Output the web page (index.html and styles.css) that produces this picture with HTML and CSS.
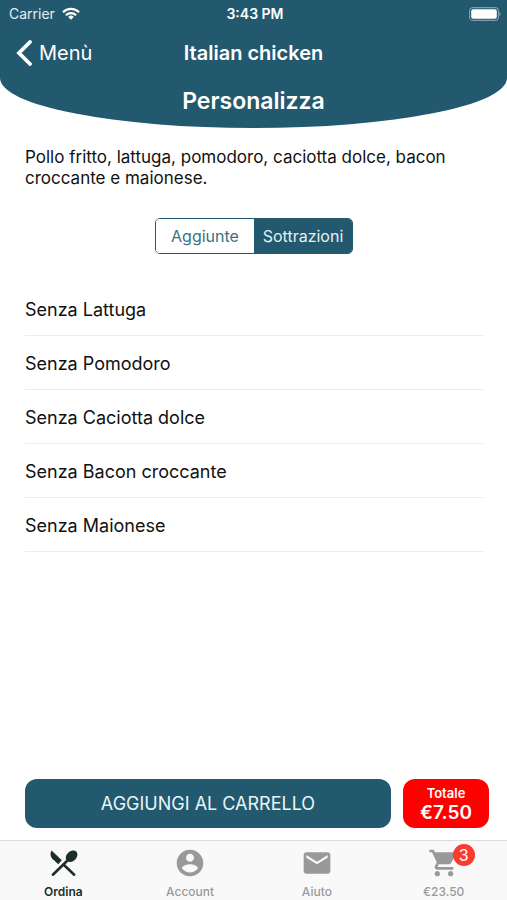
FILE: index.html
```html
<!DOCTYPE html>
<html lang="it">
<head>
<meta charset="utf-8">
<meta name="viewport" content="width=device-width, initial-scale=1">
<title>Italian chicken</title>
<link rel="stylesheet" href="styles.css">
</head>
<body>
<header class="header">
  <div class="status">
    <div class="carrier">
      <span>Carrier</span>
      <svg class="wifi" viewBox="0 0 18 13" aria-hidden="true">
        <g fill="none" stroke="currentColor" stroke-width="2.2">
          <path d="M1 5.2a11.4 11.4 0 0 1 16 0"/>
          <path d="M3.900 8.300a7.300 7.300 0 0 1 10.200 0"/>
        </g>
        <path fill="currentColor" d="M9 12.700 6.200 9.900a4 4 0 0 1 5.600 0z"/>
      </svg>
    </div>
    <span class="clock">3:43 PM</span>
    <svg class="battery" viewBox="0 0 32 14" aria-hidden="true">
      <rect x=".6" y=".6" width="28.800" height="12.800" rx="3.500" fill="none" stroke="#7f9fae" stroke-width="1.100"/>
      <rect x="2.200" y="2.200" width="25.600" height="9.600" rx="2" fill="#fff"/>
      <path d="M30.300 4.800a2.500 2.500 0 0 1 0 4.400z" fill="#7f9fae"/>
    </svg>
  </div>
  <nav class="navbar">
    <a class="back" href="#">
      <svg class="chevron" viewBox="0 0 16 26" aria-hidden="true"><path d="M14 2 3 13l11 11" fill="none" stroke="currentColor" stroke-width="3.800" stroke-linecap="round" stroke-linejoin="miter"/></svg>
      <span>Menù</span>
    </a>
    <h1 class="title">Italian chicken</h1>
  </nav>
</header>
<div class="curve"><h2 class="subtitle">Personalizza</h2></div>
<main class="content">
  <p class="description">Pollo fritto, lattuga, pomodoro, caciotta dolce, bacon croccante e maionese.</p>
  <div class="segments">
    <button class="segment" type="button">Aggiunte</button>
    <button class="segment selected" type="button" aria-pressed="true">Sottrazioni</button>
  </div>
  <ul class="options">
    <li class="option">Senza Lattuga</li>
    <li class="option">Senza Pomodoro</li>
    <li class="option">Senza Caciotta dolce</li>
    <li class="option">Senza Bacon croccante</li>
    <li class="option">Senza Maionese</li>
  </ul>
</main>
<section class="actions">
  <button class="add" type="button">AGGIUNGI AL CARRELLO</button>
  <div class="total"><span class="total-label">Totale</span><span class="total-value">€7.50</span></div>
</section>
<nav class="tabs">
  <a class="tab active" href="#">
    <svg class="icon" viewBox="0 0 32 32" aria-hidden="true">
      <path d="M4.600 3.600 14.800 13.300 11.300 17.200 5 11.400C3.200 9.400 2.900 6 4.600 3.600z"/>
      <ellipse cx="24.600" cy="9.200" rx="4.900" ry="6.600" transform="rotate(45 24.600 9.200)"/>
      <path d="M22 12 5.900 27.700M16.200 17.300 27.200 27.700" fill="none" stroke="currentColor" stroke-width="2.600" stroke-linecap="round"/>
    </svg>
    <span>Ordina</span>
  </a>
  <a class="tab" href="#">
    <svg class="icon" viewBox="0 0 24 24" aria-hidden="true"><path d="M12 2C6.480 2 2 6.480 2 12s4.480 10 10 10 10-4.480 10-10S17.520 2 12 2zm0 3c1.660 0 3 1.340 3 3s-1.340 3-3 3-3-1.340-3-3 1.340-3 3-3zm0 14.200c-2.500 0-4.710-1.280-6-3.220.03-1.990 4-3.080 6-3.080 1.990 0 5.970 1.090 6 3.080-1.290 1.940-3.500 3.220-6 3.220z"/></svg>
    <span>Account</span>
  </a>
  <a class="tab" href="#">
    <svg class="icon" viewBox="0 0 24 24" aria-hidden="true"><path d="M20 4H4c-1.100 0-1.990.9-1.990 2L2 18c0 1.100.9 2 2 2h16c1.100 0 2-.9 2-2V6c0-1.100-.9-2-2-2zm0 4l-8 5-8-5V6l8 5 8-5v2z"/></svg>
    <span>Aiuto</span>
  </a>
  <a class="tab" href="#">
    <span class="cart">
      <svg class="icon" viewBox="0 0 24 24" aria-hidden="true"><path d="M7 18c-1.100 0-1.990.9-1.990 2S5.900 22 7 22s2-.9 2-2-.9-2-2-2zM1 2v2h2l3.600 7.590-1.350 2.450c-.16.28-.25.61-.25.96 0 1.100.9 2 2 2h12v-2H7.420c-.14 0-.25-.11-.25-.25l.03-.12.9-1.630h7.450c.75 0 1.410-.41 1.750-1.030l3.580-6.490c.08-.14.12-.31.12-.48 0-.55-.45-1-1-1H5.210l-.94-2H1zm16 16c-1.100 0-1.990.9-1.990 2s.89 2 1.990 2 2-.9 2-2-.9-2-2-2z"/></svg>
      <span class="badge">3</span>
    </span>
    <span>€23.50</span>
  </a>
</nav>
</body>
</html>
```

FILE: styles.css
```css
* {
  box-sizing: border-box;
}

body {
  margin: 0;
  min-height: 100vh;
  display: flex;
  flex-direction: column;
  background: #fff;
  color: #111;
  font-family: Inter, "Liberation Sans", sans-serif;
}

a {
  color: inherit;
  text-decoration: none;
}

button {
  font: inherit;
  cursor: pointer;
}

h1,
h2,
p,
ul {
  margin: 0;
  padding: 0;
  font-weight: 600;
}

.header,
.curve {
  background: #23596e;
  color: #fff;
}

.status {
  display: grid;
  grid-template-columns: 1fr auto 1fr;
  align-items: center;
  height: 27px;
  padding: 0 6px 0 9px;
  font-size: 14px;
}

.carrier {
  display: flex;
  align-items: center;
  gap: 7px;
  color: #e6edf0;
}

.wifi {
  width: 18px;
  height: 13px;
  color: #fff;
}

.clock {
  font-weight: 600;
}

.battery {
  width: 32px;
  height: 14px;
  justify-self: end;
}

.navbar {
  display: grid;
  grid-template-columns: 1fr auto 1fr;
  align-items: center;
  height: 51px;
  padding: 0 16px;
}

.back {
  display: flex;
  align-items: center;
  gap: 7px;
  font-size: 20px;
}

.chevron {
  width: 16px;
  height: 26px;
}

.title {
  font-size: 20px;
}

.curve {
  height: 50px;
  border-radius: 0 0 50% 50% / 0 0 50px 50px;
  text-align: center;
}

.subtitle {
  font-size: 23px;
  line-height: 47px;
}

.content {
  flex: 1;
  padding: 19px 24px 0 25px;
}

.description {
  font-size: 17px;
  font-weight: 400;
  line-height: 21px;
}

.segments {
  display: grid;
  grid-template-columns: 1fr 1fr;
  width: 198px;
  height: 36px;
  margin: 29px auto 0;
  border: 1px solid #23596e;
  border-radius: 5px;
  overflow: hidden;
}

.segment {
  padding: 0;
  border: 0;
  background: #fff;
  color: #3c7084;
  font-size: 16px;
}

.segment.selected {
  background: #23596e;
  color: #e2f0f5;
}

.options {
  margin-top: 28px;
  list-style: none;
}

.option {
  height: 54px;
  border-bottom: 1px solid #ebebeb;
  font-size: 18px;
  font-weight: 400;
  line-height: 55px;
}

.actions {
  display: flex;
  gap: 12px;
  padding: 0 18px 12px 25px;
}

.add {
  flex: 1;
  height: 49px;
  border: 0;
  border-radius: 12px;
  background: #23596e;
  color: #e8f5f8;
  font-size: 18px;
}

.total {
  display: flex;
  flex-direction: column;
  align-items: center;
  justify-content: center;
  width: 86px;
  border-radius: 12px;
  background: #f00;
  color: #fff;
  font-weight: 600;
}

.total-label {
  font-size: 13px;
  line-height: 18px;
}

.total-value {
  font-size: 19px;
  line-height: 22px;
}

.tabs {
  display: grid;
  grid-template-columns: repeat(4, 1fr);
  height: 60px;
  border-top: 1px solid #dcdcdc;
  background: #f9f9f9;
  color: #999;
}

.tab {
  display: flex;
  flex-direction: column;
  align-items: center;
  gap: 5px;
  padding-top: 6px;
  font-size: 12px;
  font-weight: 500;
  line-height: 16px;
}

.tab.active {
  color: #1d2e28;
  font-weight: 600;
}

.icon {
  display: block;
  width: 32px;
  height: 32px;
  fill: currentColor;
}

.cart {
  position: relative;
}

.badge {
  position: absolute;
  top: -3px;
  right: -15px;
  width: 22px;
  height: 22px;
  border-radius: 50%;
  background: #fb3b30;
  color: #fff;
  font-size: 16px;
  font-weight: 400;
  line-height: 22px;
  text-align: center;
}
```
